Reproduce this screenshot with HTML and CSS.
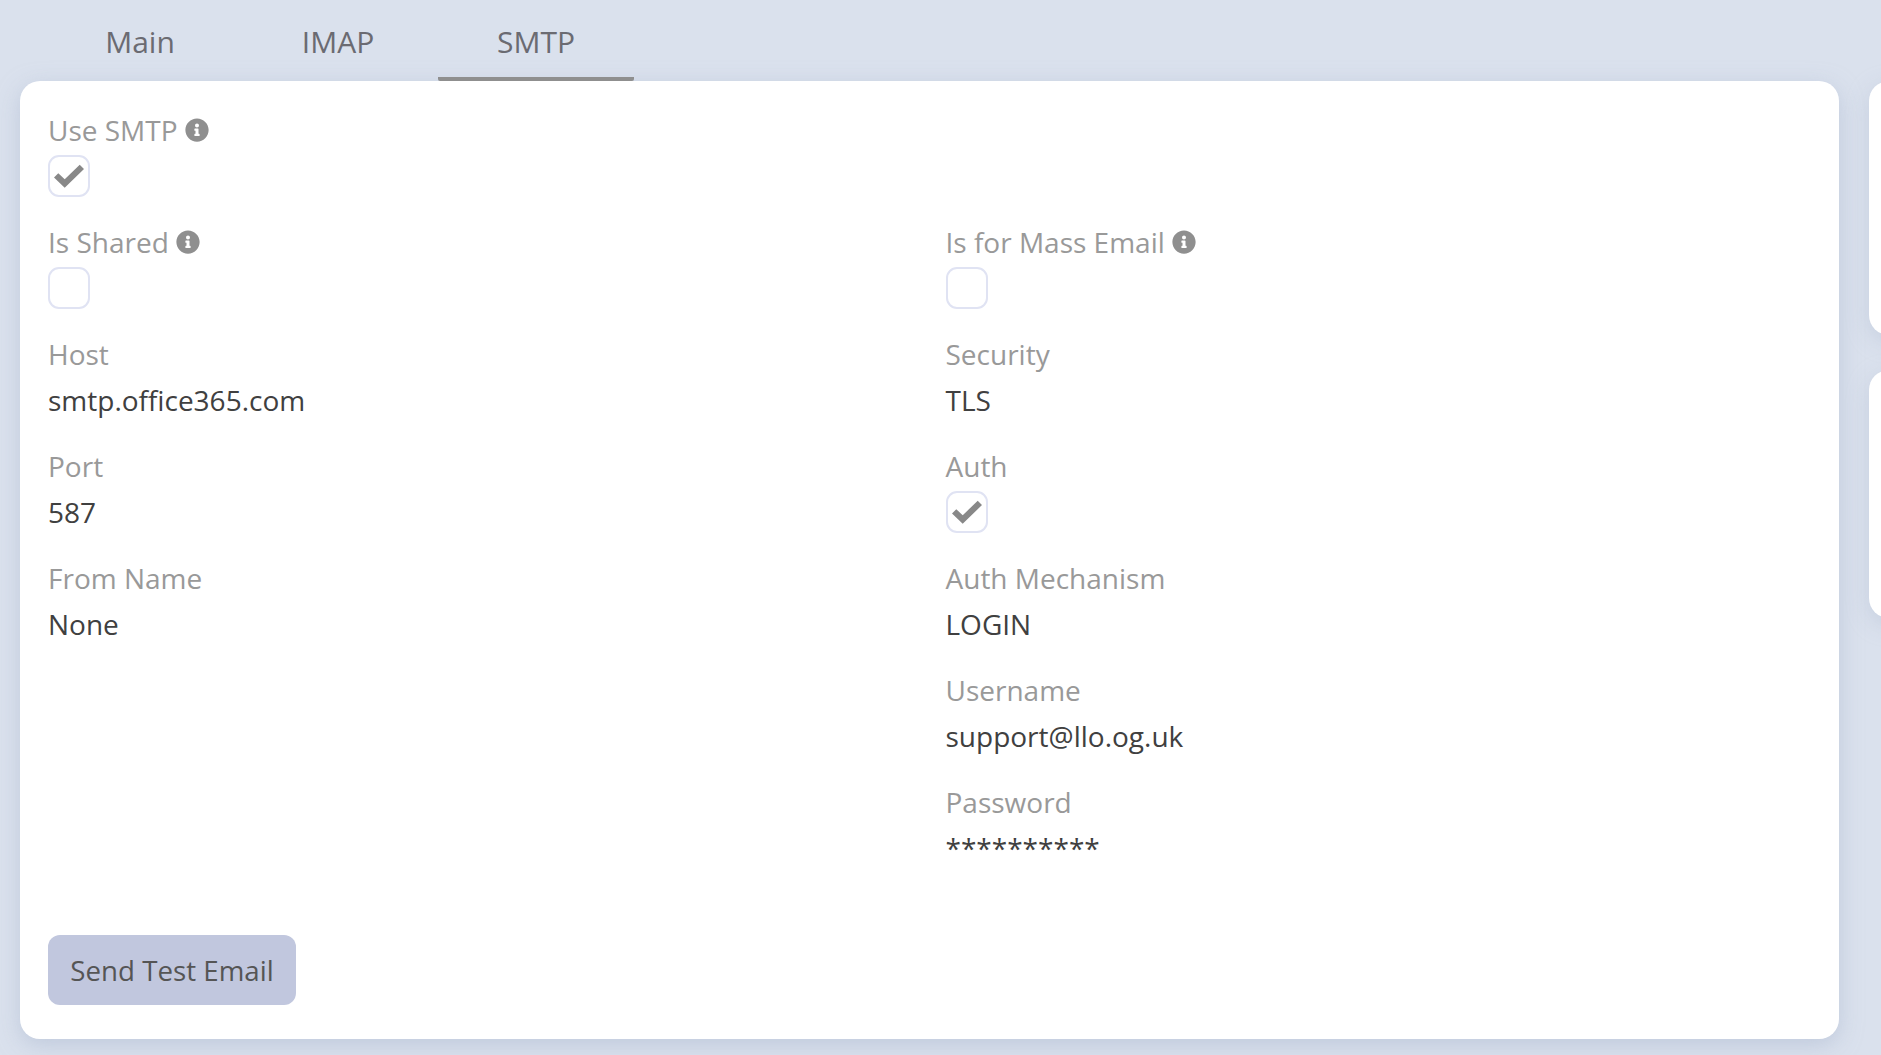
FILE: index.html
```html
<!DOCTYPE html>
<html lang="en">
<head>
<meta charset="utf-8">
<title>SMTP settings</title>
<link rel="stylesheet" href="styles.css">
</head>
<body>
<svg class="defs" width="0" height="0" aria-hidden="true">
  <symbol id="info" viewBox="0 0 512 512"><path d="M256 8C119.043 8 8 119.083 8 256c0 136.997 111.043 248 248 248s248-111.003 248-248C504 119.083 392.957 8 256 8zm0 110c23.196 0 42 18.804 42 42s-18.804 42-42 42-42-18.804-42-42 18.804-42 42-42zm56 254c0 6.627-5.373 12-12 12h-88c-6.627 0-12-5.373-12-12v-24c0-6.627 5.373-12 12-12h12v-64h-12c-6.627 0-12-5.373-12-12v-24c0-6.627 5.373-12 12-12h64c6.627 0 12 5.373 12 12v100h12c6.627 0 12 5.373 12 12v24z"/></symbol>
  <symbol id="check" viewBox="0 0 28 22"><path d="M0 12.5 4 8.5 10 14 24 .5 28 4.5 10 22Z"/></symbol>
</svg>
<div class="layout">
  <main class="main">
    <nav class="tabs">
      <a class="tab">Main</a>
      <a class="tab">IMAP</a>
      <a class="tab active">SMTP</a>
    </nav>
    <section class="panel">
      <div class="field">
        <div class="label">Use SMTP <svg class="info"><use href="#info"/></svg></div>
        <div class="control"><span class="box"><svg class="tick"><use href="#check"/></svg></span></div>
      </div>
      <div class="columns">
        <div class="column">
          <div class="field">
            <div class="label">Is Shared <svg class="info"><use href="#info"/></svg></div>
            <div class="control"><span class="box"></span></div>
          </div>
          <div class="field">
            <div class="label">Host</div>
            <div class="control">smtp.office365.com</div>
          </div>
          <div class="field">
            <div class="label">Port</div>
            <div class="control">587</div>
          </div>
          <div class="field">
            <div class="label">From Name</div>
            <div class="control">None</div>
          </div>
        </div>
        <div class="column">
          <div class="field">
            <div class="label">Is for Mass Email <svg class="info"><use href="#info"/></svg></div>
            <div class="control"><span class="box"></span></div>
          </div>
          <div class="field">
            <div class="label">Security</div>
            <div class="control">TLS</div>
          </div>
          <div class="field">
            <div class="label">Auth</div>
            <div class="control"><span class="box"><svg class="tick"><use href="#check"/></svg></span></div>
          </div>
          <div class="field">
            <div class="label">Auth Mechanism</div>
            <div class="control">LOGIN</div>
          </div>
          <div class="field">
            <div class="label">Username</div>
            <div class="control">support@llo.og.uk</div>
          </div>
          <div class="field">
            <div class="label">Password</div>
            <div class="control">**********</div>
          </div>
        </div>
      </div>
      <button class="send" type="button">Send Test Email</button>
    </section>
  </main>
  <aside class="side">
    <div class="side-card first"></div>
    <div class="side-card second"></div>
  </aside>
</div>
</body>
</html>
```

FILE: styles.css
```css
* { box-sizing: border-box; }
html, body { height: 100%; }
body {
  margin: 0;
  background: #dae1ed;
  font-family: "Open Sans", "Liberation Sans", sans-serif;
  font-size: 28px;
  overflow: hidden;
}
.defs { position: absolute; }
.layout {
  display: flex;
  gap: 30px;
  padding-left: 20px;
  width: 1881px;
}
.main { width: 1819px; flex: none; }
.tabs {
  display: flex;
  height: 81px;
  padding-left: 22px;
  gap: 2px;
}
.tab {
  display: flex;
  align-items: center;
  justify-content: center;
  width: 196px;
  height: 81px;
  padding-top: 5px;
  font-size: 30px;
  color: #6b6b72;
  border-bottom: 4px solid transparent;
  border-radius: 0 0 2px 2px;
}
.tab.active { border-bottom-color: #8f8f8f; }
.panel {
  background: #fff;
  border-radius: 20px;
  padding: 29px 28px 34px;
  height: 958px;
  box-shadow: 0 6px 22px rgba(170, 182, 205, .55);
}
.columns {
  display: grid;
  grid-template-columns: 865px 865px;
  column-gap: 32.5px;
}
.field {
  height: 112px;
  padding-bottom: 25px;
}
.label {
  display: flex;
  align-items: center;
  gap: 7px;
  height: 40px;
  margin-bottom: 5px;
  color: #999;
  line-height: 40px;
}
.info { width: 24px; height: 24px; fill: #8f8f8f; flex: none; }
.control {
  height: 42px;
  line-height: 42px;
  color: #404040;
}
.box {
  display: flex;
  align-items: center;
  justify-content: center;
  width: 42px;
  height: 42px;
  border: 2px solid #e0e3f3;
  border-radius: 11px;
}
.tick { width: 30px; height: 24px; fill: #888; }
.send {
  display: block;
  margin-top: 41px;
  width: 248px;
  height: 70px;
  padding: 0;
  border: 0;
  border-radius: 12px;
  background: #c1c7de;
  color: #555;
  font: 27.7px "Open Sans", "Liberation Sans", sans-serif;
}
.side { flex: none; width: 60px; padding-top: 81px; }
.side-card {
  background: #fff;
  border-radius: 20px;
  box-shadow: 0 6px 22px rgba(170, 182, 205, .4);
}
.first { height: 254px; margin-bottom: 35px; }
.second { height: 248px; }
```
